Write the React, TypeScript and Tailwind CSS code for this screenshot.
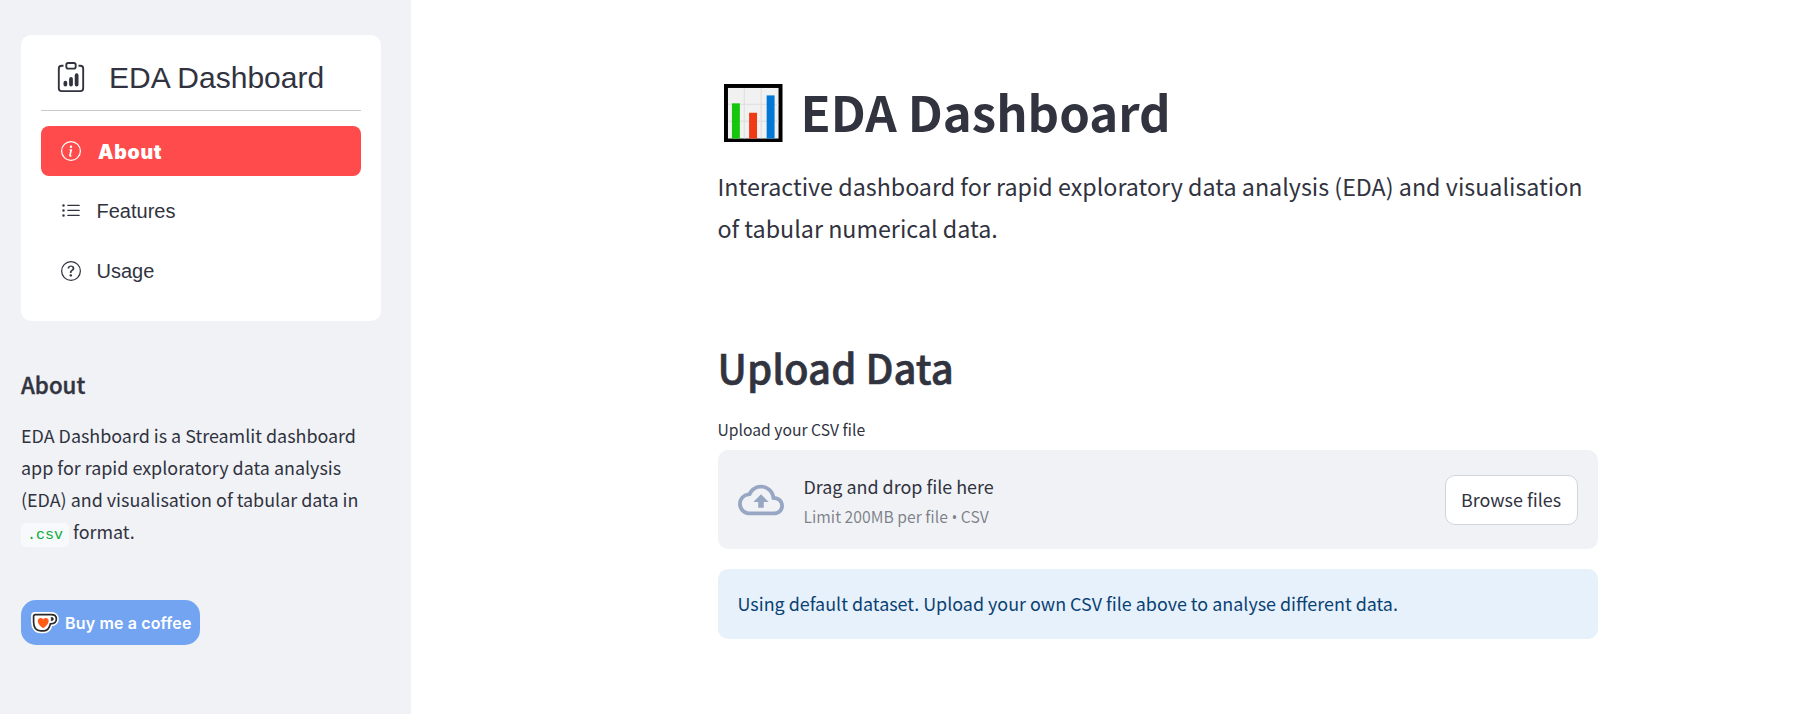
import type { ReactNode } from "react";
import { BsClipboardData, BsInfoCircle, BsListUl, BsQuestionCircle } from "react-icons/bs";
import { MdOutlineCloudUpload } from "react-icons/md";

function ChartIcon() {
  return (
    <svg className="mt-[4px] h-[58.500px] w-[58.500px] shrink-0" viewBox="0 0 59 59" aria-hidden="true">
      <rect width="59" height="59" fill="#000" />
      <rect x="4" y="4" width="51" height="51" fill="#f1f1f1" />
      <path d="M20.5 4v51M37.5 4v51M4 20.5h51M4 37.5h51" stroke="#dedede" strokeWidth="1" />
      <rect x="8" y="19.5" width="8" height="35.5" fill="#16c60c" />
      <rect x="25.3" y="29" width="8" height="26" fill="#f03a17" />
      <rect x="43" y="11.5" width="8" height="43.5" fill="#0078d7" />
    </svg>
  );
}

function CupIcon() {
  return (
    <svg className="h-[22px] w-[28px] shrink-0" viewBox="0 0 28 22" aria-hidden="true">
      <path
        d="M4 1.6h16.4c3.700 0 6 2.200 6 5.300 0 3.400-2.700 5.600-6.300 5.900-1.200 4.500-3.400 7-7.200 7H9.800C4.600 19.800 1.600 16 1.600 10V4c0-1.400 1-2.400 2.400-2.400z"
        fill="#fff"
        stroke="#fff"
        strokeWidth="3"
      />
      <path
        d="M4.300 2.600h15.900c3.200 0 5.200 1.700 5.200 4.300 0 2.900-2.500 4.800-6 4.900-1 4.500-3 7-6.500 7H9.800C5 18.800 2.600 15.400 2.600 10V4.300c0-1 .700-1.700 1.700-1.700z"
        fill="#fff"
        stroke="#2a2a2a"
        strokeWidth="1.700"
      />
      <path d="M20.300 5.400c1.400 0 2 .600 2 1.600s-.700 1.600-2 1.700z" fill="#2a2a2a" stroke="#2a2a2a" strokeWidth=".8" />
      <path
        d="M12.200 16.200C9.500 14.200 6.700 11.700 6.700 8.900c0-3.300 3.900-4 5.500-1.500 1.600-2.500 5.500-1.800 5.500 1.500 0 2.800-2.800 5.300-5.500 7.300z"
        fill="#ff5a16"
      />
    </svg>
  );
}

function MenuItem({ icon, label, active = false }: { icon: ReactNode; label: string; active?: boolean }) {
  return (
    <a
      className={
        active
          ? "flex h-[50px] items-center rounded-lg bg-[#ff4b4b] pl-5 text-white"
          : "flex h-[50px] items-center rounded-lg pl-5 text-[#31333f]"
      }
    >
      {icon}
      <span
        className={
          active
            ? "mt-[2px] ml-[17px] font-['Inter',sans-serif] text-[19.500px] leading-[30px] font-black tracking-[0.7px]"
            : "ml-[15.500px] text-xl leading-[30px]"
        }
      >
        {label}
      </span>
    </a>
  );
}

function Sidebar() {
  return (
    <aside className="flex w-[411px] shrink-0 flex-col items-start bg-[#f0f2f6] pt-[35px] pl-[21px]">
      <nav className="h-[286px] w-[360px] rounded-[10px] bg-white px-5 pt-5 font-['Liberation_Sans',sans-serif] text-[#31333f]">
        <div className="flex h-[56px] items-center border-b border-[#c8c9cc] pb-[11px] pl-[15px]">
          <BsClipboardData className="size-[30px]" />
          <span className="ml-[23px] text-[30px] leading-[45px] whitespace-nowrap">EDA Dashboard</span>
        </div>
        <div className="mt-[15px] flex flex-col gap-2.5">
          <MenuItem active icon={<BsInfoCircle className="size-5" />} label="About" />
          <MenuItem icon={<BsListUl className="size-5" />} label="Features" />
          <MenuItem icon={<BsQuestionCircle className="size-5" />} label="Usage" />
        </div>
      </nav>

      <h3 className="mt-12 text-[22.300px] leading-[30px] font-medium [-webkit-text-stroke:0.4px_#31333f]">About</h3>
      <p className="mt-5 text-[17.920px] leading-8 whitespace-nowrap">
        EDA Dashboard is a Streamlit dashboard
        <br />
        app for rapid exploratory data analysis
        <br />
        (EDA) and visualisation of tabular data in
        <br />
        <code className="rounded-[5px] bg-[#f8f9fb] px-1.5 pt-[4px] pb-[3px] font-['Liberation_Mono',monospace] text-[15px] leading-none text-[#09ab3b]">
          .csv
        </code>{" "}
        format.
      </p>

      <a className="mt-[53px] flex h-[45px] w-[179px] shrink-0 items-center rounded-[15px] bg-[#72a4f2] pl-[10px]">
        <CupIcon />
        <span className="ml-[6px] font-['Inter',sans-serif] text-[16px] leading-5 font-semibold tracking-[0.15px] whitespace-nowrap text-white">
          Buy me a coffee
        </span>
      </a>
    </aside>
  );
}

export default function App() {
  return (
    <div className="flex h-[714px] w-[1817px] overflow-hidden bg-white font-['Noto_Sans_CJK_SC',sans-serif] text-[#31333f]">
      <Sidebar />
      <main className="flex-1 pt-[78px] pl-[306.500px]">
        <div className="w-[880px]">
          <h1 className="flex h-[66px] items-center gap-[18px] pl-[6.500px] text-[49.100px] leading-[66px] font-bold whitespace-nowrap">
            <ChartIcon />
            <span>EDA Dashboard</span>
          </h1>
          <p className="mt-[21px] text-[23.280px] leading-[42px] whitespace-nowrap">
            Interactive dashboard for rapid exploratory data analysis (EDA) and visualisation
            <br />
            of tabular numerical data.
          </p>

          <h2 className="mt-[91px] text-[40.100px] leading-[54px] font-medium [-webkit-text-stroke:0.6px_#31333f]">
            Upload Data
          </h2>
          <div className="mt-[22px] text-[15.700px] leading-7">Upload your CSV file</div>
          <section className="mt-[6px] flex h-[99px] items-center rounded-[10px] bg-[#f0f2f6] px-5">
            <MdOutlineCloudUpload className="size-[46px] text-[#97a6c3]" />
            <div className="ml-5 flex flex-col pt-[3px]">
              <span className="text-[17.920px] leading-[31px]">Drag and drop file here</span>
              <span className="text-[15.700px] leading-[30px] text-[#31333f]/60">
                Limit 200MB per file <span className="font-['Open_Sans',sans-serif] leading-none">•</span> CSV
              </span>
            </div>
            <button className="ml-auto h-[50px] w-[133px] rounded-[10px] border border-[#d3d4d9] bg-white pb-[2px] text-[17.920px] leading-8 whitespace-nowrap">
              Browse files
            </button>
          </section>
          <div className="mt-5 flex h-[70px] items-center rounded-[10px] bg-[#e7f1fb] px-5 pb-[2px] text-[17.920px] leading-8 text-[#0a4173]">
            Using default dataset. Upload your own CSV file above to analyse different data.
          </div>
        </div>
      </main>
    </div>
  );
}
